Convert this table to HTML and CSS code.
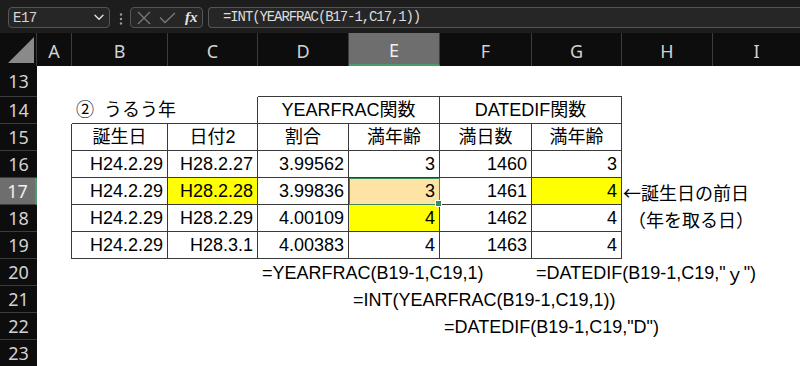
FILE: index.html
```html
<!DOCTYPE html>
<html lang="ja">
<head>
<meta charset="utf-8">
<title>Excel</title>
<link rel="stylesheet" href="styles.css">
</head>
<body>
<div class="app">
  <div class="fbar">
    <div class="namebox">
      <span class="nb-text">E17</span>
      <svg class="chev" width="10" height="7" viewBox="0 0 10 7"><path d="M1 1.2 L5 5.2 L9 1.2" fill="none" stroke="#e0e0e0" stroke-width="1.4" stroke-linecap="round" stroke-linejoin="round"/></svg>
    </div>
    <svg class="dots" width="4" height="12" viewBox="0 0 4 12"><circle cx="2" cy="1.5" r="1.2" fill="#9a9a9a"/><circle cx="2" cy="6" r="1.2" fill="#9a9a9a"/><circle cx="2" cy="10.5" r="1.2" fill="#9a9a9a"/></svg>
    <div class="btns">
      <svg width="14" height="14" viewBox="0 0 14 14"><path d="M1 1 L13 13 M13 1 L1 13" stroke="#7a7a7a" stroke-width="1.3" fill="none"/></svg>
      <svg width="17" height="12" viewBox="0 0 17 12"><path d="M1 5.5 L6 10.5 L16 1" stroke="#7a7a7a" stroke-width="1.3" fill="none"/></svg>
      <span class="fx">fx</span>
    </div>
    <div class="formula">=INT(YEARFRAC(B17-1,C17,1))</div>
  </div>

  <div class="sheet">
    <div class="corner"><svg width="26" height="26" viewBox="0 0 26 26"><polygon points="26,0 26,26 0,26" fill="#8a8a8a"/></svg></div>
    <div class="ch">A</div><div class="ch">B</div><div class="ch">C</div><div class="ch">D</div><div class="ch on">E</div><div class="ch">F</div><div class="ch">G</div><div class="ch">H</div><div class="ch last">I</div>

    <div class="rh">13</div>
    <div class="c"></div><div class="c"></div><div class="c"></div><div class="c bb"></div><div class="c bb"></div><div class="c bb"></div><div class="c bb"></div><div class="c"></div><div class="c"></div>

    <div class="rh">14</div>
    <div class="c"></div><div class="c l bb title">②&nbsp; うるう年</div><div class="c bb br"></div><div class="c b ctr span2">YEARFRAC関数</div><div class="c b ctr span2">DATEDIF関数</div><div class="c"></div><div class="c"></div>

    <div class="rh">15</div>
    <div class="c br"></div><div class="c b ctr">誕生日</div><div class="c b ctr">日付2</div><div class="c b ctr">割合</div><div class="c b ctr">満年齢</div><div class="c b ctr">満日数</div><div class="c b ctr">満年齢</div><div class="c"></div><div class="c"></div>

    <div class="rh">16</div>
    <div class="c br"></div><div class="c b r">H24.2.29</div><div class="c b r">H28.2.27</div><div class="c b r">3.99562</div><div class="c b r">3</div><div class="c b r">1460</div><div class="c b r">3</div><div class="c"></div><div class="c"></div>

    <div class="rh on">17</div>
    <div class="c br"></div><div class="c b r">H24.2.29</div><div class="c b r yel">H28.2.28</div><div class="c b r">3.99836</div><div class="c b r sel">3</div><div class="c b r">1461</div><div class="c b r yel">4</div><div class="c l note">←誕生日の前日</div><div class="c"></div>

    <div class="rh">18</div>
    <div class="c br"></div><div class="c b r">H24.2.29</div><div class="c b r">H28.2.29</div><div class="c b r">4.00109</div><div class="c b r yel">4</div><div class="c b r">1462</div><div class="c b r">4</div><div class="c l note note2">（年を取る日）</div><div class="c"></div>

    <div class="rh">19</div>
    <div class="c br"></div><div class="c b r">H24.2.29</div><div class="c b r">H28.3.1</div><div class="c b r">4.00383</div><div class="c b r">4</div><div class="c b r">1463</div><div class="c b r">4</div><div class="c"></div><div class="c"></div>

    <div class="rh">20</div>
    <div class="c"></div><div class="c"></div><div class="c"></div><div class="c l">=YEARFRAC(B19-1,C19,1)</div><div class="c"></div><div class="c"></div><div class="c l">=DATEDIF(B19-1,C19,"<span class="ja">ｙ</span>")</div><div class="c"></div><div class="c"></div>

    <div class="rh">21</div>
    <div class="c"></div><div class="c"></div><div class="c"></div><div class="c"></div><div class="c l">=INT(YEARFRAC(B19-1,C19,1))</div><div class="c"></div><div class="c"></div><div class="c"></div><div class="c"></div>

    <div class="rh">22</div>
    <div class="c"></div><div class="c"></div><div class="c"></div><div class="c"></div><div class="c"></div><div class="c l">=DATEDIF(B19-1,C19,"D")</div><div class="c"></div><div class="c"></div><div class="c"></div>

    <div class="rh">23</div>
    <div class="c"></div><div class="c"></div><div class="c"></div><div class="c"></div><div class="c"></div><div class="c"></div><div class="c"></div><div class="c"></div><div class="c"></div>
  </div>
</div>
</body>
</html>
```

FILE: styles.css
```css
* { box-sizing: border-box; }
html, body { margin: 0; padding: 0; background: #0d0d0d; }
body { width: 800px; height: 366px; overflow: hidden; }

.app { width: 800px; height: 366px; overflow: hidden; display: flex; flex-direction: column; }

/* formula bar */
.fbar {
  height: 33px;
  flex: none;
  background: #1d1d1d;
  display: flex;
  align-items: flex-start;
  padding: 7px 0 0 8px;
}
.namebox {
  width: 102px;
  height: 21px;
  background: #262626;
  border: 1px solid #555;
  border-radius: 4px;
  display: flex;
  align-items: center;
  justify-content: space-between;
  padding: 0 5px 0 4px;
}
.nb-text {
  font-family: "Liberation Mono", monospace;
  font-size: 14px;
  color: #d6d6d6;
  letter-spacing: -0.5px;
}
.chev { display: block; }
.dots { display: block; margin: 6px 7px 0 9px; }
.btns {
  width: 73px;
  height: 21px;
  background: #262626;
  border: 1px solid #555;
  border-radius: 4px;
  display: flex;
  align-items: center;
  padding: 0 4px 0 6px;
  gap: 8px;
}
.btns svg { display: block; }
.fx {
  font-family: "Liberation Serif", serif;
  font-style: italic;
  font-weight: bold;
  font-size: 15px;
  color: #e4e4e4;
  margin-left: 1px;
  line-height: 1;
}
.formula {
  flex: 1;
  margin-left: 5px;
  margin-right: -6px;
  height: 21px;
  background: #262626;
  border: 1px solid #555;
  border-right: none;
  border-radius: 4px 0 0 4px;
  font-family: "Liberation Mono", monospace;
  font-size: 14px;
  letter-spacing: -1.1px;
  color: #dcdcdc;
  padding-left: 14px;
  line-height: 19px;
  white-space: nowrap;
}

/* sheet */
.sheet {
  flex: 1;
  display: grid;
  grid-template-columns: 37px 35px 96px 90px 91px 91px 92px 90px 91px 87px;
  grid-template-rows: 33px 31px repeat(10, 27px);
  background: #ffffff;
  font-family: "Liberation Sans", "Noto Sans CJK JP", sans-serif;
  font-size: 18px;
  color: #000;
}
.corner {
  background: #0d0d0d;
  display: flex;
  align-items: flex-end;
  justify-content: flex-end;
  padding: 0 2px 3px 0;
  border-right: 1px solid #3a3a3a;
}
.corner svg { display: block; }
.ch {
  background: #0d0d0d;
  color: #d2d2d2;
  font-family: "Noto Sans", sans-serif;
  font-size: 18px;
  display: flex;
  align-items: center;
  justify-content: center;
  border-right: 1px solid #3c3c3c;
  padding-top: 2px;
}
.ch.last { border-right: none; }
.ch.on {
  background: #6e6e6e;
  color: #f0f0f0;
  border-bottom: 2px solid #4c9a6c;
}
.rh {
  background: #0d0d0d;
  color: #d2d2d2;
  font-family: "Noto Sans", sans-serif;
  font-size: 18px;
  display: flex;
  align-items: center;
  justify-content: center;
  border-bottom: 1px solid #3c3c3c;
}
.rh.on {
  background: #6e6e6e;
  color: #f0f0f0;
  border-right: 2px solid #4c9a6c;
}

.c {
  display: flex;
  align-items: center;
  white-space: nowrap;
  min-width: 0;
  padding: 0 4px;
  line-height: 1;
}
.c.r { justify-content: flex-end; }
.c.l { justify-content: flex-start; }
.c.ctr { justify-content: center; }
.span2 { grid-column: span 2; }
.b { border-right: 1px solid #3a3a3a; border-bottom: 1px solid #3a3a3a; }
.bb { border-bottom: 1px solid #3a3a3a; }
.br { border-right: 1px solid #3a3a3a; }
.yel { background: #ffff00; }
.title { padding-left: 4px; }
.note { padding-left: 1px; font-family: "Noto Sans CJK JP", sans-serif; }
.note2 { padding-left: 6px; }
.ja { font-family: "Noto Sans CJK JP", sans-serif; line-height: 0; }
.sel {
  background: #fde4a4;
  position: relative;
  outline: 1px solid #3f8a5c;
  outline-offset: -1px;
}
.sel::after {
  content: "";
  position: absolute;
  right: -3px;
  bottom: -3px;
  width: 5px;
  height: 5px;
  background: #3f8a5c;
  border: 1px solid #fff;
}
```
